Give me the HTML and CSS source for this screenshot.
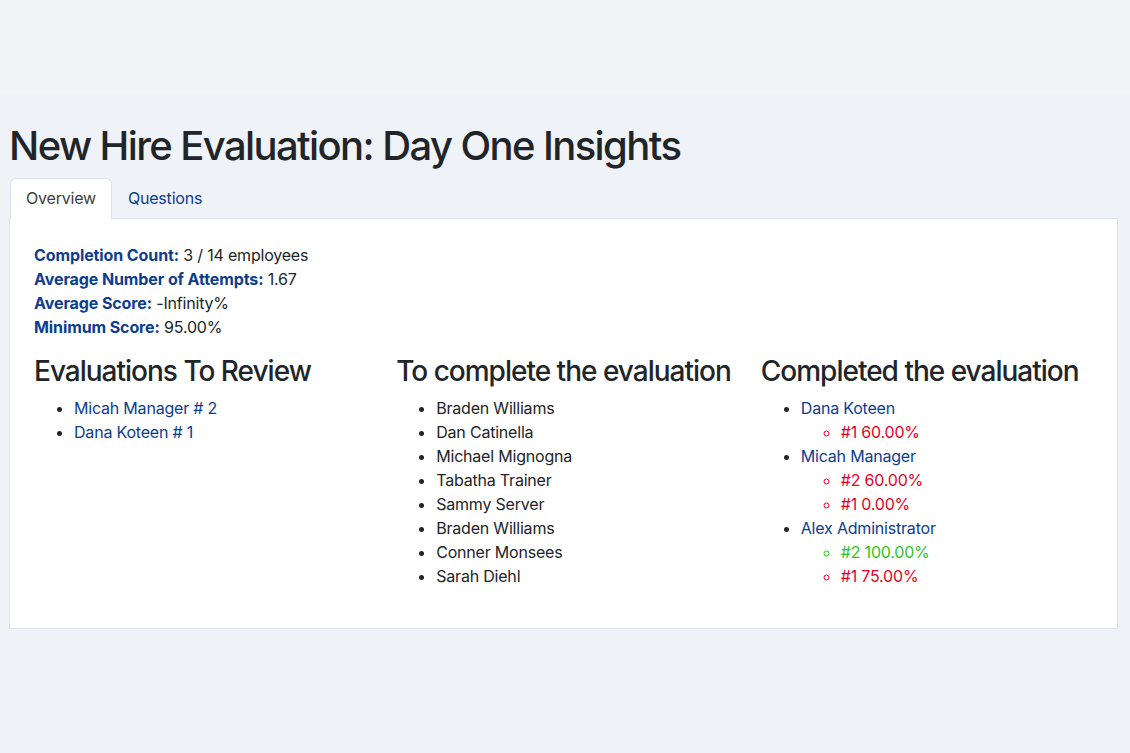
FILE: index.html
```html
<!DOCTYPE html>
<html lang="en">
<head>
<meta charset="utf-8">
<title>New Hire Evaluation: Day One Insights</title>
<link rel="stylesheet" href="styles.css">
</head>
<body>
<header class="topbar"></header>
<main class="page">
  <h1 class="title">New Hire Evaluation: Day One Insights</h1>
  <ul class="tabs">
    <li class="tab active">Overview</li>
    <li class="tab"><a href="#">Questions</a></li>
  </ul>
  <section class="card">
    <div class="stats">
      <div><span class="label">Completion Count:</span> 3 / 14 employees</div>
      <div><span class="label">Average Number of Attempts:</span> 1.67</div>
      <div><span class="label">Average Score:</span> -Infinity%</div>
      <div><span class="label">Minimum Score:</span> 95.00%</div>
    </div>
    <div class="columns">
      <div class="col">
        <h3>Evaluations To Review</h3>
        <ul class="list">
          <li><a href="#">Micah Manager # 2</a></li>
          <li><a href="#">Dana Koteen # 1</a></li>
        </ul>
      </div>
      <div class="col">
        <h3>To complete the evaluation</h3>
        <ul class="list">
          <li>Braden Williams</li>
          <li>Dan Catinella</li>
          <li>Michael Mignogna</li>
          <li>Tabatha Trainer</li>
          <li>Sammy Server</li>
          <li>Braden Williams</li>
          <li>Conner Monsees</li>
          <li>Sarah Diehl</li>
        </ul>
      </div>
      <div class="col">
        <h3>Completed the evaluation</h3>
        <ul class="list">
          <li><a href="#">Dana Koteen</a>
            <ul class="sub">
              <li class="fail">#1 60.00%</li>
            </ul>
          </li>
          <li><a href="#">Micah Manager</a>
            <ul class="sub">
              <li class="fail">#2 60.00%</li>
              <li class="fail">#1 0.00%</li>
            </ul>
          </li>
          <li><a href="#">Alex Administrator</a>
            <ul class="sub">
              <li class="pass">#2 100.00%</li>
              <li class="fail">#1 75.00%</li>
            </ul>
          </li>
        </ul>
      </div>
    </div>
  </section>
</main>
</body>
</html>
```
FILE: styles.css
```css
html, body {
  margin: 0;
  padding: 0;
}
body {
  background: #eff2f7;
  font-family: Inter, "Noto Sans", "Liberation Sans", sans-serif;
  font-size: 16px;
  line-height: 24px;
  color: #212529;
  letter-spacing: -0.2px;
}
.topbar {
  height: 95px;
  background: #f2f5f8;
}
.page {
  padding: 27px 12px 0 9px;
}
.title {
  margin: 0 0 8px 0;
  font-size: 40px;
  line-height: 48px;
  font-weight: 500;
  color: #212529;
  letter-spacing: -1.6px;
}
.tabs {
  list-style: none;
  margin: 0;
  padding: 0;
  display: flex;
  position: relative;
  z-index: 1;
}
.tab {
  padding: 8px 15px;
  border: 1px solid transparent;
  border-bottom: none;
  border-radius: 6px 6px 0 0;
  line-height: 23px;
  color: #3a3f44;
}
.tab.active {
  background: #fff;
  border-color: #dee2e6;
  margin-left: 1px;
  margin-bottom: -1px;
  padding-bottom: 9px;
}
.tab a {
  color: #0b3d91;
  text-decoration: none;
}
.card {
  background: #fff;
  border: 1px solid #dee2e6;
  padding: 24px;
}
.stats {
  margin-bottom: 16px;
}
.label {
  font-weight: 700;
  color: #0b3d91;
  letter-spacing: -0.1px;
}
.columns {
  display: grid;
  grid-template-columns: repeat(3, 1fr);
  column-gap: 30px;
}
h3 {
  margin: 0 0 8px 0;
  font-size: 28px;
  line-height: 33px;
  font-weight: 500;
  color: #212529;
  letter-spacing: -1px;
  white-space: nowrap;
}
.list {
  margin: 0 0 16px 0;
  padding-left: 40px;
  list-style: disc;
}
.list a {
  color: #0b3d91;
  text-decoration: none;
}
.sub {
  margin: 0;
  padding-left: 40px;
  list-style: circle;
}
.fail {
  color: #e8001f;
}
.pass {
  color: #2ec41e;
}
```
